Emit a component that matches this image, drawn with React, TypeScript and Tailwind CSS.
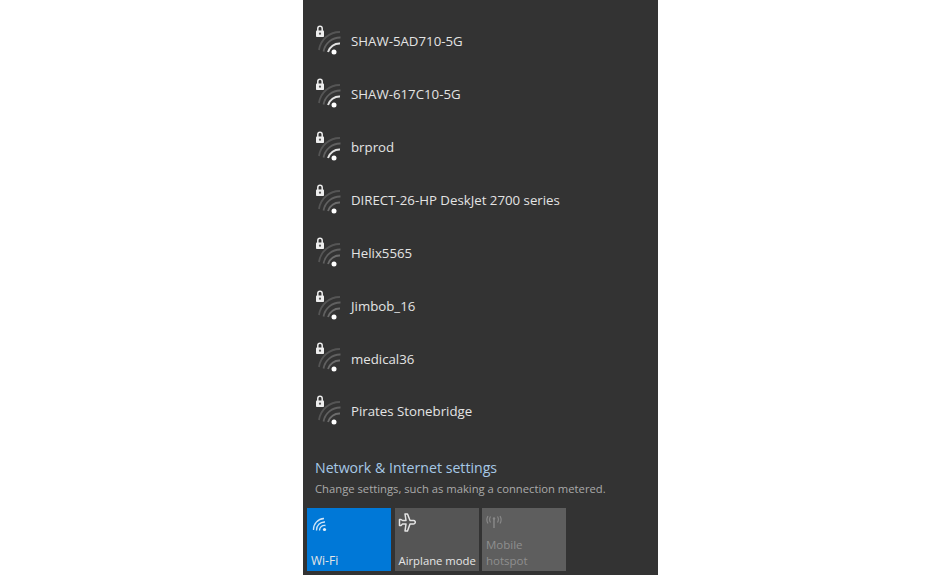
const font = { fontFamily: '"Open Sans", "Noto Sans", sans-serif' };

const networks: [string, boolean][] = [
  ["SHAW-5AD710-5G", true],
  ["SHAW-617C10-5G", true],
  ["brprod", true],
  ["DIRECT-26-HP DeskJet 2700 series", false],
  ["Helix5565", false],
  ["Jimbob_16", false],
  ["medical36", false],
  ["Pirates Stonebridge", false],
];

function WifiLock({ strong }: { strong: boolean }) {
  return (
    <svg width="30" height="34" viewBox="0 0 30 34" fill="none" className="shrink-0">
      <path d="M3.8 6V3.4a2.2 2.2 0 0 1 4.4 0V6" stroke="#eeeeee" strokeWidth="1.5" />
      <rect x="2" y="5.5" width="8" height="6.5" rx="0.8" fill="#eeeeee" />
      <circle cx="6" cy="8.7" r="1.1" fill="#555555" />
      <path d="M5 25A21 21 0 0 1 26 7" stroke="#555555" strokeWidth="1.8" />
      <path d="M9.5 26.5A17 17 0 0 1 26.5 12.5" stroke="#606060" strokeWidth="1.8" />
      <path
        d="M14 27A12 12 0 0 1 26 18.5"
        stroke={strong ? "#e2e2e2" : "#6c6c6c"}
        strokeWidth={strong ? 2 : 1.8}
      />
      <circle cx="20" cy="27" r="2.5" fill="#ffffff" />
    </svg>
  );
}

export default function App() {
  return (
    <div className="w-[950px] h-[575px] bg-white overflow-hidden" style={font}>
      <div className="ml-[303px] w-[355px] h-[575px] bg-[#333333] flex flex-col">
        <div className="pt-[16px] flex flex-col">
          {networks.map(([name, strong]) => (
            <div key={name} className="h-[52.85px] flex items-center pl-[11px] gap-[7px]">
              <WifiLock strong={strong} />
              <span className="text-[13.25px] text-[#e4e4e4] whitespace-nowrap">{name}</span>
            </div>
          ))}
        </div>
        <div className="mt-[19.2px] pl-[12px]">
          <div className="text-[14.15px] leading-[20px] text-[#a6c8e6]">Network &amp; Internet settings</div>
          <div className="mt-[1px] text-[11.25px] leading-[20px] text-[#aaaaaa] whitespace-nowrap">
            Change settings, such as making a connection metered.
          </div>
        </div>
        <div className="mt-[9px] pl-[4px] flex gap-[3.5px]">
          <div className="w-[84px] h-[63px] bg-[#0078d7] flex flex-col justify-between pl-[4px] pt-[9px] pb-[1px]">
            <svg width="16" height="15" viewBox="0 0 16 15" fill="none" className="ml-[1px]">
              <path d="M1.5 13A11 11 0 0 1 12 1.5" stroke="#cfe4f7" strokeWidth="1.3" />
              <path d="M4.5 13.5A8 8 0 0 1 13 5" stroke="#cfe4f7" strokeWidth="1.3" />
              <path d="M7.5 13.5A5 5 0 0 1 13.5 8.5" stroke="#cfe4f7" strokeWidth="1.3" />
              <circle cx="12.5" cy="12.5" r="1.6" fill="#e6f1fb" />
            </svg>
            <span className="text-[12px] leading-[18px] text-[#e6e6e6]">Wi-Fi</span>
          </div>
          <div className="w-[84px] h-[63px] bg-[#555555] flex flex-col justify-between pl-[4px] pt-[5px] pb-[1px]">
            <svg width="18" height="20" viewBox="0 0 18 20" fill="none" className="-ml-[1px]">
              <path d="M7 1h2.5l2.5 6.5h3.5a1.6 1.6 0 0 1 1.5 2.5 1.6 1.6 0 0 1-1.5 1H12l-2.5 7H7l1-7H4.5L3 12.5H1.5V6.5H3l1.5 1H8z" stroke="#e4e4e4" strokeWidth="1.5" strokeLinejoin="round" />
            </svg>
            <span className="text-[11.3px] leading-[18px] text-[#e6e6e6] whitespace-nowrap">Airplane mode</span>
          </div>
          <div className="w-[84px] h-[63px] bg-[#5e5e5e] flex flex-col justify-between pl-[4px] pt-[7px] pb-[1px]">
            <svg width="16" height="14" viewBox="0 0 16 14" fill="none">
              <path d="M8 4v9" stroke="#8a8a8a" strokeWidth="1.4" />
              <circle cx="8" cy="3.5" r="1.2" fill="#8a8a8a" />
              <path d="M4.5 1.5c-1.2 2-1.2 4 0 6M11.5 1.5c1.2 2 1.2 4 0 6M2 1c-1.5 2.5-1.5 5 0 7.5M14 1c1.5 2.5 1.5 5 0 7.5" stroke="#8a8a8a" strokeWidth="1.1" />
            </svg>
            <span className="text-[11.5px] leading-[16.5px] text-[#8f8f8f]">
              Mobile
              <br />
              hotspot
            </span>
          </div>
        </div>
      </div>
    </div>
  );
}
